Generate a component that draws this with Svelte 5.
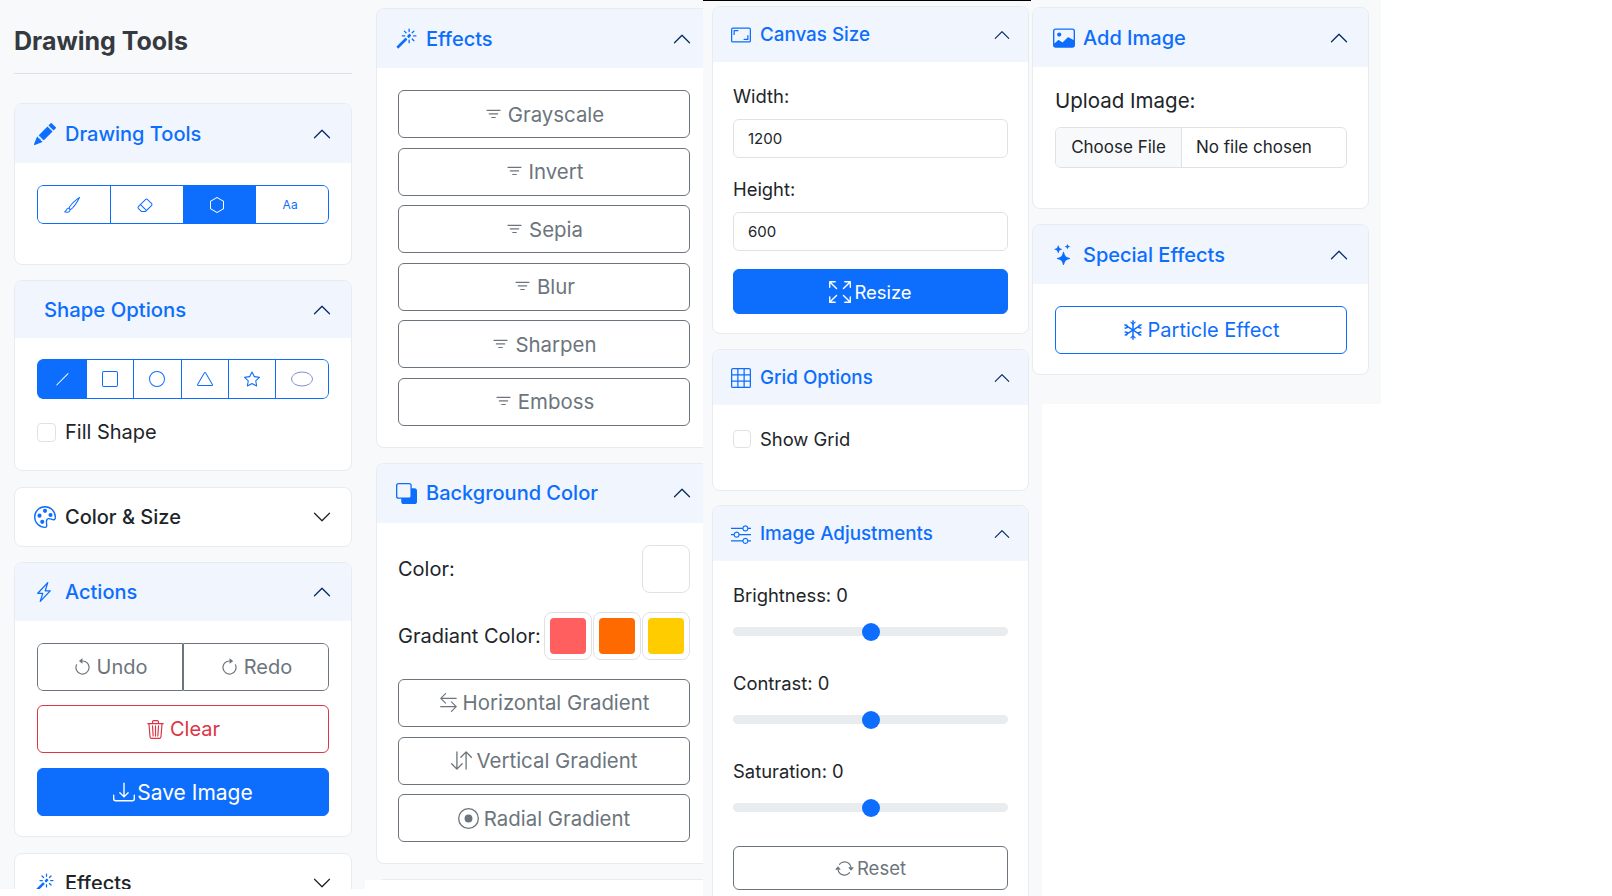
<script>
  const icons = {
    pencil: ['M12.854.146a.5.5 0 0 0-.707 0L10.5 1.793 14.207 5.5l1.647-1.646a.5.5 0 0 0 0-.708l-3-3zm.646 6.061L9.793 2.5 3.293 9H3.5a.5.5 0 0 1 .5.5v.5h.5a.5.5 0 0 1 .5.5v.5h.5a.5.5 0 0 1 .5.5v.5h.5a.5.5 0 0 1 .5.5v.207l6.5-6.5zm-7.468 7.468A.5.5 0 0 1 6 13.5V13h-.5a.5.5 0 0 1-.5-.5V12h-.5a.5.5 0 0 1-.5-.5V11h-.5a.5.5 0 0 1-.5-.5V10h-.5a.499.499 0 0 1-.175-.032l-.179.178a.5.5 0 0 0-.11.168l-2 5a.5.5 0 0 0 .65.65l5-2a.5.5 0 0 0 .168-.11l.178-.178z'],
    brush: ['M15.825.12a.5.5 0 0 1 .132.584c-1.53 3.43-4.743 8.17-7.095 10.64a6.067 6.067 0 0 1-2.373 1.534c-.018.227-.06.538-.16.868-.201.659-.667 1.479-1.708 1.74a8.118 8.118 0 0 1-3.078.132 3.659 3.659 0 0 1-.562-.135 1.382 1.382 0 0 1-.466-.247.714.714 0 0 1-.204-.288.622.622 0 0 1 .004-.443c.095-.245.316-.38.461-.452.394-.197.625-.453.867-.826.095-.144.184-.297.287-.472l.117-.198c.151-.255.326-.54.546-.848.528-.739 1.201-.925 1.746-.896.126.007.243.025.348.048.062-.172.142-.38.238-.608.261-.619.658-1.419 1.187-2.069 2.176-2.67 6.18-6.206 9.117-8.104a.5.5 0 0 1 .596.04zM4.705 11.912a1.23 1.23 0 0 0-.419-.1c-.246-.013-.573.05-.879.479-.197.275-.355.532-.5.777l-.105.177c-.106.181-.213.362-.32.528a3.39 3.39 0 0 1-.76.861c.69.112 1.736.111 2.657-.12.559-.139.843-.569.993-1.06a3.122 3.122 0 0 0 .126-.75l-.793-.792zm1.44.026c.12-.04.277-.1.458-.183a5.068 5.068 0 0 0 1.535-1.1c1.9-1.996 4.412-5.57 6.052-8.631-2.59 1.927-5.566 4.66-7.302 6.792-.442.543-.795 1.243-1.042 1.826-.121.288-.214.54-.275.72v.001l.575.575z'],
    eraser: ['M8.086 2.207a2 2 0 0 1 2.828 0l3.879 3.879a2 2 0 0 1 0 2.828l-5.5 5.5A2 2 0 0 1 7.879 15H5.12a2 2 0 0 1-1.414-.586l-2.5-2.5a2 2 0 0 1 0-2.828l6.879-6.879zm2.121.707a1 1 0 0 0-1.414 0L4.16 7.547l5.293 5.293 4.633-4.633a1 1 0 0 0 0-1.414l-3.879-3.879zM8.746 13.547 3.453 8.254 1.914 9.793a1 1 0 0 0 0 1.414l2.5 2.5a1 1 0 0 0 .707.293H7.88a1 1 0 0 0 .707-.293l.16-.16z'],
    hexagon: ['M14 4.577v6.846L8 15l-6-3.577V4.577L8 1l6 3.577zM8.5.134a1 1 0 0 0-1 0l-6 3.577a1 1 0 0 0-.5.866v6.846a1 1 0 0 0 .5.866l6 3.577a1 1 0 0 0 1 0l6-3.577a1 1 0 0 0 .5-.866V4.577a1 1 0 0 0-.5-.866L8.5.134z'],
    palette: ['M8 5a1.5 1.5 0 1 0 0-3 1.5 1.5 0 0 0 0 3zm4 3a1.5 1.5 0 1 0 0-3 1.5 1.5 0 0 0 0 3zM5.5 7a1.5 1.5 0 1 1-3 0 1.5 1.5 0 0 1 3 0zm.5 6a1.5 1.5 0 1 0 0-3 1.5 1.5 0 0 0 0 3z', 'M16 8c0 3.15-1.866 2.585-3.567 2.07C11.42 9.763 10.465 9.473 10 10c-.603.683-.475 1.819-.351 2.92C9.826 14.495 9.996 16 8 16a8 8 0 1 1 8-8zm-8 7c.611 0 .654-.171.655-.176.078-.146.124-.464.07-1.119-.014-.168-.037-.37-.061-.591-.052-.464-.112-1.005-.118-1.462-.01-.707.083-1.61.704-2.314.369-.417.845-.578 1.272-.618.404-.038.812.026 1.16.104.343.077.702.186 1.025.284l.028.008c.346.105.658.199.953.266.653.148.904.083.991.024C14.717 9.38 15 9.161 15 8a7 7 0 1 0-7 7z'],
    lightning: ['M11.251.068a.5.5 0 0 1 .227.58L9.677 6.5H13a.5.5 0 0 1 .364.843l-8 8.5a.5.5 0 0 1-.842-.49L6.323 9.5H3a.5.5 0 0 1-.364-.843l8-8.5a.5.5 0 0 1 .615-.09zM4.157 8.5H7a.5.5 0 0 1 .478.647L6.11 13.59l5.732-6.09H9a.5.5 0 0 1-.478-.647L9.89 2.41 4.157 8.5z'],
    undo: ['M8 3a5 5 0 1 1-4.546 2.914.5.5 0 0 0-.908-.417A6 6 0 1 0 8 2v1z', 'M8 4.466V.534a.25.25 0 0 0-.41-.192L5.23 2.308a.25.25 0 0 0 0 .384l2.36 1.966A.25.25 0 0 0 8 4.466z'],
    redo: ['M8 3a5 5 0 1 0 4.546 2.914.5.5 0 0 1 .908-.417A6 6 0 1 1 8 2v1z', 'M8 4.466V.534a.25.25 0 0 1 .41-.192l2.36 1.966c.12.1.12.284 0 .384L8.41 4.658A.25.25 0 0 1 8 4.466z'],
    trash: ['M6.5 1h3a.5.5 0 0 1 .5.5v1H6v-1a.5.5 0 0 1 .5-.5ZM11 2.5v-1A1.5 1.5 0 0 0 9.5 0h-3A1.5 1.5 0 0 0 5 1.5v1H2.506a.58.58 0 0 0-.01 0H1.5a.5.5 0 0 0 0 1h.538l.853 10.66A2 2 0 0 0 4.885 16h6.23a2 2 0 0 0 1.994-1.84l.853-10.66h.538a.5.5 0 0 0 0-1h-.995a.59.59 0 0 0-.01 0H11Zm1.958 1-.846 10.58a1 1 0 0 1-.997.92h-6.23a1 1 0 0 1-.997-.92L3.042 3.5h9.916Zm-7.487 1a.5.5 0 0 1 .528.47l.5 8.5a.5.5 0 0 1-.998.06L5 5.03a.5.5 0 0 1 .47-.53Zm5.058 0a.5.5 0 0 1 .47.53l-.5 8.5a.5.5 0 1 1-.998-.06l.5-8.5a.5.5 0 0 1 .528-.47ZM8 4.5a.5.5 0 0 1 .5.5v8.5a.5.5 0 0 1-1 0V5a.5.5 0 0 1 .5-.5Z'],
    download: ['M.5 9.9a.5.5 0 0 1 .5.5v2.5a1 1 0 0 0 1 1h12a1 1 0 0 0 1-1v-2.5a.5.5 0 0 1 1 0v2.5a2 2 0 0 1-2 2H2a2 2 0 0 1-2-2v-2.5a.5.5 0 0 1 .5-.5z', 'M7.646 11.854a.5.5 0 0 0 .708 0l3-3a.5.5 0 0 0-.708-.708L8.5 10.293V1.5a.5.5 0 0 0-1 0v8.793L5.354 8.146a.5.5 0 1 0-.708.708l3 3z'],
    magic: ['M9.5 2.672a.5.5 0 1 0 1 0V.843a.5.5 0 0 0-1 0v1.829Zm4.5.035A.5.5 0 0 0 13.293 2L12 3.293a.5.5 0 1 0 .707.707L14 2.707ZM7.293 4A.5.5 0 1 0 8 3.293L6.707 2A.5.5 0 0 0 6 2.707L7.293 4Zm-.621 2.5a.5.5 0 1 0 0-1H4.843a.5.5 0 1 0 0 1h1.829Zm8.485 0a.5.5 0 1 0 0-1h-1.829a.5.5 0 0 0 0 1h1.829ZM13.293 10A.5.5 0 1 0 14 9.293L12.707 8a.5.5 0 1 0-.707.707L13.293 10ZM9.5 11.157a.5.5 0 0 0 1 0V9.328a.5.5 0 0 0-1 0v1.829Zm1.854-5.097a.5.5 0 0 0 0-.706l-.708-.708a.5.5 0 0 0-.707 0L8.646 5.94a.5.5 0 0 0 0 .707l.708.708a.5.5 0 0 0 .707 0l1.293-1.293Zm-3 3a.5.5 0 0 0 0-.706l-.708-.708a.5.5 0 0 0-.707 0L.646 13.94a.5.5 0 0 0 0 .707l.708.708a.5.5 0 0 0 .707 0L8.354 9.06Z'],
    filter: ['M6 10.5a.5.5 0 0 1 .5-.5h3a.5.5 0 0 1 0 1h-3a.5.5 0 0 1-.5-.5zm-2-3a.5.5 0 0 1 .5-.5h7a.5.5 0 0 1 0 1h-7a.5.5 0 0 1-.5-.5zm-2-3a.5.5 0 0 1 .5-.5h11a.5.5 0 0 1 0 1h-11a.5.5 0 0 1-.5-.5z'],
    back: ['M0 2a2 2 0 0 1 2-2h8a2 2 0 0 1 2 2v2h2a2 2 0 0 1 2 2v8a2 2 0 0 1-2 2H6a2 2 0 0 1-2-2v-2H2a2 2 0 0 1-2-2V2zm2-1a1 1 0 0 0-1 1v8a1 1 0 0 0 1 1h8a1 1 0 0 0 1-1V2a1 1 0 0 0-1-1H2z'],
    leftright: ['M1 11.5a.5.5 0 0 0 .5.5h11.793l-3.147 3.146a.5.5 0 0 0 .708.708l4-4a.5.5 0 0 0 0-.708l-4-4a.5.5 0 0 0-.708.708L13.293 11H1.5a.5.5 0 0 0-.5.5zm14-7a.5.5 0 0 1-.5.5H2.707l3.147 3.146a.5.5 0 1 1-.708.708l-4-4a.5.5 0 0 1 0-.708l4-4a.5.5 0 1 1 .708.708L2.707 4H14.5a.5.5 0 0 1 .5.5z'],
    downup: ['M11.5 15a.5.5 0 0 0 .5-.5V2.707l3.146 3.147a.5.5 0 0 0 .708-.708l-4-4a.5.5 0 0 0-.708 0l-4 4a.5.5 0 1 0 .708.708L11 2.707V14.5a.5.5 0 0 0 .5.5zm-7-14a.5.5 0 0 1 .5.5v11.793l3.146-3.147a.5.5 0 0 1 .708.708l-4 4a.5.5 0 0 1-.708 0l-4-4a.5.5 0 0 1 .708-.708L4 13.293V1.5a.5.5 0 0 1 .5-.5z'],
    record: ['M8 15A7 7 0 1 1 8 1a7 7 0 0 1 0 14zm0 1A8 8 0 1 0 8 0a8 8 0 0 0 0 16z', 'M11 8a3 3 0 1 1-6 0 3 3 0 0 1 6 0z'],
    aspect: ['M0 3.5A1.5 1.5 0 0 1 1.5 2h13A1.5 1.5 0 0 1 16 3.5v9a1.5 1.5 0 0 1-1.5 1.5h-13A1.5 1.5 0 0 1 0 12.5v-9zM1.5 3a.5.5 0 0 0-.5.5v9a.5.5 0 0 0 .5.5h13a.5.5 0 0 0 .5-.5v-9a.5.5 0 0 0-.5-.5h-13z', 'M2 4.5a.5.5 0 0 1 .5-.5h3a.5.5 0 0 1 0 1H3v2.5a.5.5 0 0 1-1 0v-3zm12 7a.5.5 0 0 1-.5.5h-3a.5.5 0 0 1 0-1H13V8.5a.5.5 0 0 1 1 0v3z'],
    fullscreen: ['M5.828 10.172a.5.5 0 0 0-.707 0l-4.096 4.096V11.5a.5.5 0 0 0-1 0v3.975a.5.5 0 0 0 .5.5H4.5a.5.5 0 0 0 0-1H1.732l4.096-4.096a.5.5 0 0 0 0-.707zm4.344 0a.5.5 0 0 1 .707 0l4.096 4.096V11.5a.5.5 0 1 1 1 0v3.975a.5.5 0 0 1-.5.5H11.5a.5.5 0 0 1 0-1h2.768l-4.096-4.096a.5.5 0 0 1 0-.707zm0-4.344a.5.5 0 0 0 .707 0l4.096-4.096V4.5a.5.5 0 1 0 1 0V.525a.5.5 0 0 0-.5-.5H11.5a.5.5 0 0 0 0 1h2.768l-4.096 4.096a.5.5 0 0 0 0 .707zm-4.344 0a.5.5 0 0 1-.707 0L1.025 1.732V4.5a.5.5 0 0 1-1 0V.525a.5.5 0 0 1 .5-.5H4.5a.5.5 0 0 1 0 1H1.732l4.096 4.096a.5.5 0 0 1 0 .707z'],
    grid: ['M0 1.5A1.5 1.5 0 0 1 1.5 0h13A1.5 1.5 0 0 1 16 1.5v13a1.5 1.5 0 0 1-1.5 1.5h-13A1.5 1.5 0 0 1 0 14.5v-13zM1.5 1a.5.5 0 0 0-.5.5V5h4V1H1.5zM5 6H1v4h4V6zm1 4h4V6H6v4zm-1 1H1v3.5a.5.5 0 0 0 .5.5H5v-4zm1 0v4h4v-4H6zm5 0v4h3.5a.5.5 0 0 0 .5-.5V11h-4zm0-1h4V6h-4v4zm0-5h4V1.5a.5.5 0 0 0-.5-.5H11v4zm-1 0V1H6v4h4z'],
    sliders: ['M11.5 2a1.5 1.5 0 1 0 0 3 1.5 1.5 0 0 0 0-3zM9.05 3a2.5 2.5 0 0 1 4.9 0H16v1h-2.05a2.5 2.5 0 0 1-4.9 0H0V3h9.05zM4.5 7a1.5 1.5 0 1 0 0 3 1.5 1.5 0 0 0 0-3zM2.05 8a2.5 2.5 0 0 1 4.9 0H16v1H6.95a2.5 2.5 0 0 1-4.9 0H0V8h2.05zm9.45 4a1.5 1.5 0 1 0 0 3 1.5 1.5 0 0 0 0-3zm-2.45 1a2.5 2.5 0 0 1 4.9 0H16v1h-2.05a2.5 2.5 0 0 1-4.9 0H0v-1h9.05z'],
    stars: ['M7.657 6.247c.11-.33.576-.33.686 0l.645 1.937a2.89 2.89 0 0 0 1.829 1.828l1.936.645c.33.11.33.576 0 .686l-1.937.645a2.89 2.89 0 0 0-1.828 1.829l-.645 1.936a.361.361 0 0 1-.686 0l-.645-1.937a2.89 2.89 0 0 0-1.828-1.828l-1.937-.645a.361.361 0 0 1 0-.686l1.937-.645a2.89 2.89 0 0 0 1.828-1.828l.645-1.937zM3.794 1.148a.217.217 0 0 1 .412 0l.387 1.162c.173.518.579.924 1.097 1.097l1.162.387a.217.217 0 0 1 0 .412l-1.162.387A1.734 1.734 0 0 0 4.593 5.69l-.387 1.162a.217.217 0 0 1-.412 0L3.407 5.69A1.734 1.734 0 0 0 2.31 4.593l-1.162-.387a.217.217 0 0 1 0-.412l1.162-.387A1.734 1.734 0 0 0 3.407 2.31l.387-1.162zM10.863.099a.145.145 0 0 1 .274 0l.258.774c.115.346.386.617.732.732l.774.258a.145.145 0 0 1 0 .274l-.774.258a1.156 1.156 0 0 0-.732.732l-.258.774a.145.145 0 0 1-.274 0l-.258-.774a1.156 1.156 0 0 0-.732-.732L9.1 2.137a.145.145 0 0 1 0-.274l.774-.258c.346-.115.617-.386.732-.732L10.863.1z'],
    repeat: ['M11.534 7h3.932a.25.25 0 0 1 .192.41l-1.966 2.36a.25.25 0 0 1-.384 0l-1.966-2.36a.25.25 0 0 1 .192-.41zm-11 2h3.932a.25.25 0 0 0 .192-.41L2.692 6.23a.25.25 0 0 0-.384 0L.342 8.59A.25.25 0 0 0 .534 9z', 'M8 3c-1.552 0-2.94.707-3.857 1.818a.5.5 0 1 1-.771-.636A6.002 6.002 0 0 1 13.917 7H12.9A5.002 5.002 0 0 0 8 3zM3.1 9a5.002 5.002 0 0 0 8.757 2.182.5.5 0 1 1 .771.636A6.002 6.002 0 0 1 2.083 9H3.1z'],
    image: ['M2 1a2 2 0 0 0-2 2v10a2 2 0 0 0 2 2h12a2 2 0 0 0 2-2V3a2 2 0 0 0-2-2H2zm0 1h12a1 1 0 0 1 1 1v6.5l-3.8-2a.5.5 0 0 0-.6.1L6.9 11.3 4.2 9.5a.5.5 0 0 0-.6.1L1 12V3a1 1 0 0 1 1-1z', 'M6 5.5a1.5 1.5 0 1 1-3 0 1.5 1.5 0 0 1 3 0z'],
    snow: ['M8 0a.6.6 0 0 1 .6.6v14.8a.6.6 0 0 1-1.2 0V.6A.6.6 0 0 1 8 0z', 'M1 3.6a.6.6 0 0 1 .8-.2l12.8 8.2a.6.6 0 0 1-.6 1L1.2 4.4a.6.6 0 0 1-.2-.8z', 'M15 3.6a.6.6 0 0 0-.8-.2L1.4 11.6a.6.6 0 0 0 .6 1l12.8-8.2a.6.6 0 0 0 .2-.8z', 'M6 1l2 1.6L10 1v1.2L8 3.8 6 2.2zM6 15l2-1.6L10 15v-1.2L8 12.2l-2 1.6zM.8 6.2 3 5.5 2.5 3.2l1 .6.6 2.6-2.4.7zM15.2 6.2 13 5.5l.5-2.3-1 .6-.6 2.6 2.4.7zM.8 9.8 3 10.5l-.5 2.3 1-.6.6-2.6-2.4-.7zM15.2 9.8l-2.2.7.5 2.3-1-.6-.6-2.6 2.4-.7z'],
    chevron: ['M1.646 4.646a.5.5 0 0 1 .708 0L8 10.293l5.646-5.647a.5.5 0 0 1 .708.708l-6 6a.5.5 0 0 1-.708 0l-6-6a.5.5 0 0 1 0-.708z'],
    line: ['M14.35 2.35a.5.5 0 0 1 0 .7l-11.3 11.3a.5.5 0 0 1-.7-.7l11.3-11.3a.5.5 0 0 1 .7 0z'],
    square: ['M14 0a2 2 0 0 1 2 2v12a2 2 0 0 1-2 2H2a2 2 0 0 1-2-2V2a2 2 0 0 1 2-2h12zM2 1a1 1 0 0 0-1 1v12a1 1 0 0 0 1 1h12a1 1 0 0 0 1-1V2a1 1 0 0 0-1-1H2z'],
    circle: ['M8 15A7 7 0 1 1 8 1a7 7 0 0 1 0 14zm0 1A8 8 0 1 0 8 0a8 8 0 0 0 0 16z'],
    triangle: ['M7.938 2.016A.13.13 0 0 1 8.002 2a.13.13 0 0 1 .063.016.146.146 0 0 1 .054.057l6.857 11.667c.036.06.035.124.002.183a.163.163 0 0 1-.054.06.116.116 0 0 1-.066.017H1.146a.115.115 0 0 1-.066-.017.163.163 0 0 1-.054-.06.176.176 0 0 1 .002-.183L7.884 2.073a.147.147 0 0 1 .054-.057zm1.044-.45a1.13 1.13 0 0 0-1.96 0L.165 13.233c-.457.778.091 1.767.98 1.767h13.713c.889 0 1.438-.99.98-1.767L8.982 1.566z'],
    star: ['M2.866 14.85c-.078.444.36.791.746.593l4.39-2.256 4.389 2.256c.386.198.824-.149.746-.592l-.83-4.73 3.522-3.356c.33-.314.16-.888-.282-.95l-4.898-.696L8.465.792a.513.513 0 0 0-.927 0L5.354 5.12l-4.898.696c-.441.062-.612.636-.283.95l3.523 3.356-.83 4.73zm4.905-2.767-3.686 1.894.694-3.957a.565.565 0 0 0-.163-.505L1.71 6.745l4.052-.576a.525.525 0 0 0 .393-.288L8 2.223l1.847 3.658a.525.525 0 0 0 .393.288l4.052.575-2.906 2.77a.565.565 0 0 0-.163.506l.694 3.957-3.686-1.894a.503.503 0 0 0-.461 0z']
  }
  const effects = ['Grayscale', 'Invert', 'Sepia', 'Blur', 'Sharpen', 'Emboss']
  const shapes = ['line', 'square', 'circle', 'triangle', 'star']
  const sliders = ['Brightness', 'Contrast', 'Saturation']
  const swatches = ['#ff5f5f', '#ff6a00', '#ffcc00']
</script>

{#snippet icon(name, size = 16)}
  <svg class="icon" width={size} height={size} viewBox="0 0 16 16" fill="currentColor">
    {#each icons[name] as d}<path {d} />{/each}
  </svg>
{/snippet}

{#snippet head(title, name, size, open = true, chev = 20)}
  <div class="head" class:open>
    {#if name}<span class="head-icon">{@render icon(name, size)}</span>{/if}
    <span class="head-title">{title}</span>
    <span class="chev">{@render icon('chevron', chev)}</span>
  </div>
{/snippet}

<div class="page">
  <section class="col one">
    <h1>Drawing Tools</h1>
    <hr />
    <div class="card c-tools">
      {@render head('Drawing Tools', 'pencil', 22)}
      <div class="body">
        <div class="group blue tools">
          <button>{@render icon('brush')}</button>
          <button>{@render icon('eraser')}</button>
          <button class="on">{@render icon('hexagon')}</button>
          <button class="aa">Aa</button>
        </div>
      </div>
    </div>
    <div class="card c-shape">
      <div class="head open noicon">
        <span class="head-title">Shape Options</span>
        <span class="chev">{@render icon('chevron', 20)}</span>
      </div>
      <div class="body">
        <div class="group blue shapes">
          {#each shapes as s, i}
            <button class:on={i === 0}>{@render icon(s)}</button>
          {/each}
          <button><svg width="22" height="16" viewBox="0 0 22 16"><ellipse cx="11" cy="8" rx="10.5" ry="7" fill="none" stroke="#7f8fd0" /></svg></button>
        </div>
        <label class="check"><span class="box"></span>Fill Shape</label>
      </div>
    </div>
    <div class="card c-closed">
      {@render head('Color & Size', 'palette', 22, false)}
    </div>
    <div class="card c-actions">
      {@render head('Actions', 'lightning', 20)}
      <div class="body">
        <div class="group gray">
          <button>{@render icon('undo', 19)}Undo</button>
          <button>{@render icon('redo', 19)}Redo</button>
        </div>
        <button class="btn danger">{@render icon('trash', 19)}Clear</button>
        <button class="btn primary">{@render icon('download', 22)}Save Image</button>
      </div>
    </div>
    <div class="card c-closed">
      {@render head('Effects', 'magic', 20, false)}
    </div>
  </section>

  <section class="col two">
    <div class="card">
      {@render head('Effects', 'magic', 21)}
      <div class="body">
        <div class="stack">
          {#each effects as e}
            <button class="btn">{@render icon('filter', 19)}{e}</button>
          {/each}
        </div>
      </div>
    </div>
    <div class="card">
      {@render head('Background Color', 'back', 21)}
      <div class="body">
        <div class="row">
          <span>Color:</span>
          <span class="swatch"></span>
        </div>
        <div class="row">
          <span>Gradiant Color:</span>
          <div class="swatches">
            {#each swatches as c}
              <span class="swatch"><i style="background:{c}"></i></span>
            {/each}
          </div>
        </div>
        <div class="stack">
          <button class="btn">{@render icon('leftright', 19)}Horizontal Gradient</button>
          <button class="btn">{@render icon('downup', 21)}Vertical Gradient</button>
          <button class="btn">{@render icon('record', 21)}Radial Gradient</button>
        </div>
      </div>
    </div>
    <div class="card stub"></div>
  </section>

  <section class="col three">
    <div class="card c-canvas">
      {@render head('Canvas Size', 'aspect', 20, true, 18)}
      <div class="body">
        <label class="lbl" for="w">Width:</label>
        <input id="w" class="field" value="1200" />
        <label class="lbl" for="h">Height:</label>
        <input id="h" class="field" value="600" />
        <button class="btn primary resize">{@render icon('fullscreen', 22)}Resize</button>
      </div>
    </div>
    <div class="card c-grid">
      {@render head('Grid Options', 'grid', 20, true, 18)}
      <div class="body">
        <label class="check small"><span class="box"></span>Show Grid</label>
      </div>
    </div>
    <div class="card c-adjust">
      {@render head('Image Adjustments', 'sliders', 20, true, 18)}
      <div class="body">
        {#each sliders as s}
          <div class="lbl">{s}: 0</div>
          <div class="track"><span class="thumb"></span></div>
        {/each}
        <button class="btn resize reset">{@render icon('repeat', 19)}Reset</button>
      </div>
    </div>
  </section>

  <section class="col four">
    <div class="card c-add">
      {@render head('Add Image', 'image', 22)}
      <div class="body">
        <div class="lbl">Upload Image:</div>
        <div class="file"><span class="pick">Choose File</span><span class="none">No file chosen</span></div>
      </div>
    </div>
    <div class="card">
      {@render head('Special Effects', 'stars', 21)}
      <div class="body">
        <button class="btn outline">{@render icon('snow', 20)}Particle Effect</button>
      </div>
    </div>
  </section>
</div>

<style>
  :global(body) {
    margin: 0;
    background: #fff;
  }

  .page {
    display: flex;
    align-items: flex-start;
    width: 1612px;
    height: 896px;
    overflow: hidden;
    font-family: Inter, "Liberation Sans", sans-serif;
    font-size: 20px;
    color: #212529;
  }

  .col {
    box-sizing: border-box;
    background: #f8f9fa;
    overflow: hidden;
    flex: none;
  }

  .one {
    width: 365px;
    height: 889px;
    padding: 0 13px 0 14px;
  }

  .two {
    width: 338px;
    height: 880px;
    padding: 8px 0 0 11px;
  }

  .two .card {
    width: 340px;
    border-right: 0;
    border-radius: 8px 0 0 8px;
  }

  .two .head {
    padding-right: 24px;
  }

  .two .head-icon {
    width: 30px;
  }

  .two .body {
    padding: 22px 26px 21px 21px;
  }

  .two .btn {
    font-size: 20.4px;
  }

  .three {
    width: 339px;
    height: 896px;
    font-size: 18.4px;
  }

  .three::before {
    content: "";
    display: block;
    width: 328px;
    height: 1px;
    margin-bottom: 5px;
    background: #000;
  }

  .three .card {
    width: 317px;
    margin-left: 9px;
  }

  .three .head {
    height: 55px;
    padding: 0 17px 0 18px;
    font-size: 18.8px;
  }

  .three .head-icon {
    width: 29px;
  }

  .three .body {
    padding: 21px 20px 19px;
  }

  .four {
    width: 350px;
    height: 404px;
    margin-left: -11px;
    padding: 7px 12px 0 1px;
  }

  .four .head {
    padding-left: 20px;
  }

  .four .head-icon {
    width: 30px;
  }

  .four .body {
    padding: 22px 21px 20px 22px;
  }

  h1 {
    margin: 0;
    padding: 25px 0 16px;
    font-size: 25px;
    line-height: 32px;
    font-weight: 700;
    color: #343a40;
  }

  hr {
    margin: 0 0 29px;
    border: 0;
    border-top: 1px solid #dee2e6;
  }

  .card {
    box-sizing: border-box;
    background: #fff;
    border: 1px solid #e9ecef;
    border-radius: 8px;
    margin-bottom: 15px;
    overflow: hidden;
  }

  .stub {
    height: 40px;
  }

  .head {
    display: flex;
    align-items: center;
    height: 59px;
    padding: 0 19px;
    font-weight: 500;
    font-size: 20px;
    color: #212529;
  }

  .head.open {
    background: #f0f5fe;
    color: #0d6efd;
  }

  .head.noicon {
    padding-left: 29px;
    height: 57px;
    font-size: 20.3px;
  }

  .head-icon {
    display: flex;
    width: 31px;
    color: #0d6efd;
  }

  .head-title {
    flex: 1;
  }

  .chev {
    display: flex;
    color: #212529;
  }

  .open .chev {
    color: #052c65;
    transform: rotate(180deg);
  }

  .icon {
    flex: none;
    display: block;
  }

  .body {
    padding: 22px 22px 20px;
  }

  .c-tools .body {
    box-sizing: border-box;
    height: 101px;
  }

  .c-shape {
    margin-bottom: 16px;
  }

  .c-shape .body {
    padding: 21px 22px 28px;
  }

  .c-closed .head,
  .c-actions .head {
    height: 58px;
  }

  .c-actions {
    margin-bottom: 16px;
  }

  .c-actions .primary {
    gap: 2px;
    font-size: 21px;
  }

  .group {
    display: flex;
    height: 39px;
    box-sizing: border-box;
    border-radius: 6px;
    overflow: hidden;
  }

  .group button {
    flex: 1;
    display: flex;
    align-items: center;
    justify-content: center;
    gap: 5px;
    padding: 0;
    background: #fff;
    font: inherit;
    margin-left: -1px;
  }

  .group button:first-child {
    margin-left: 0;
    border-radius: 6px 0 0 6px;
  }

  .group button:last-child {
    border-radius: 0 6px 6px 0;
  }

  .blue button {
    border: 1px solid #0d6efd;
    color: #0d6efd;
  }

  .blue button.on {
    background: #0d6efd;
    color: #fff;
  }

  .tools button {
    padding-right: 4px;
  }

  .group .aa {
    font-size: 12px;
  }

  .shapes {
    height: 40px;
  }

  .shapes button {
    flex: 0 0 48.3px;
  }

  .shapes button:first-child {
    flex-basis: 50px;
  }

  .shapes button:last-child {
    flex: 1;
  }

  .gray {
    height: 48px;
    margin-bottom: 14px;
  }

  .gray button {
    border: 1px solid #6c757d;
    color: #6c757d;
    margin-left: 0;
  }

  .check {
    display: flex;
    align-items: center;
    gap: 9px;
    margin-top: 24px;
    line-height: 19px;
  }

  .check.small {
    margin-top: 3px;
    line-height: 18px;
  }

  .box {
    flex: none;
    width: 17px;
    height: 17px;
    border: 1px solid #dee2e6;
    border-radius: 4px;
    background: #fff;
  }

  .small .box {
    width: 16px;
    height: 16px;
  }

  .btn {
    display: flex;
    align-items: center;
    justify-content: center;
    gap: 5px;
    box-sizing: border-box;
    width: 100%;
    height: 48px;
    padding: 0;
    background: #fff;
    border: 1px solid #6c757d;
    border-radius: 6px;
    color: #6c757d;
    font: inherit;
  }

  .danger {
    border-color: #dc3545;
    color: #dc3545;
    margin-bottom: 15px;
  }

  .primary {
    gap: 3px;
    background: #0d6efd;
    border-color: #0d6efd;
    color: #fff;
  }

  .outline {
    border-color: #0d6efd;
    color: #0d6efd;
  }

  .stack {
    display: flex;
    flex-direction: column;
    gap: 9.6px;
  }

  .row {
    display: flex;
    align-items: center;
    justify-content: space-between;
    margin-bottom: 19px;
  }

  .swatches {
    display: flex;
    gap: 1px;
  }

  .swatch {
    box-sizing: border-box;
    width: 48px;
    height: 48px;
    padding: 5px;
    border: 1px solid #dee2e6;
    border-radius: 8px;
    background: #fff;
  }

  .swatch i {
    display: block;
    height: 100%;
    border-radius: 4px;
  }

  .lbl {
    display: block;
    line-height: 27px;
  }

  .field {
    display: block;
    box-sizing: border-box;
    width: 100%;
    height: 39px;
    margin: 9px 0 18px;
    padding: 0 14px;
    border: 1px solid #dee2e6;
    border-radius: 6px;
    font: inherit;
    font-size: 15px;
    color: #212529;
  }

  .resize {
    height: 45px;
  }

  .reset {
    height: 44px;
    gap: 3px;
    background: #fff;
    font-size: 18.5px;
  }

  .track {
    position: relative;
    height: 9px;
    margin: 18px 0 34px;
    border-radius: 5px;
    background: #e9ecef;
  }

  .thumb {
    position: absolute;
    left: 50%;
    top: 50%;
    width: 18px;
    height: 18px;
    margin: -9px 0 0 -9px;
    border-radius: 50%;
    background: #0d6efd;
  }

  .c-grid {
    margin-bottom: 14px;
  }

  .c-grid .body {
    box-sizing: border-box;
    height: 85px;
    padding: 22px 20px;
  }

  .c-add .body {
    padding: 20px 21px 40px 22px;
  }

  .c-add .lbl {
    font-size: 20.5px;
  }

  .file {
    display: flex;
    height: 41px;
    margin-top: 13px;
    border: 1px solid #dee2e6;
    border-radius: 6px;
    overflow: hidden;
    box-sizing: border-box;
    line-height: 39px;
    font-size: 17px;
  }

  .pick {
    width: 125px;
    text-align: center;
    background: #f8f9fa;
    border-right: 1px solid #dee2e6;
  }

  .none {
    padding-left: 14px;
  }
</style>
